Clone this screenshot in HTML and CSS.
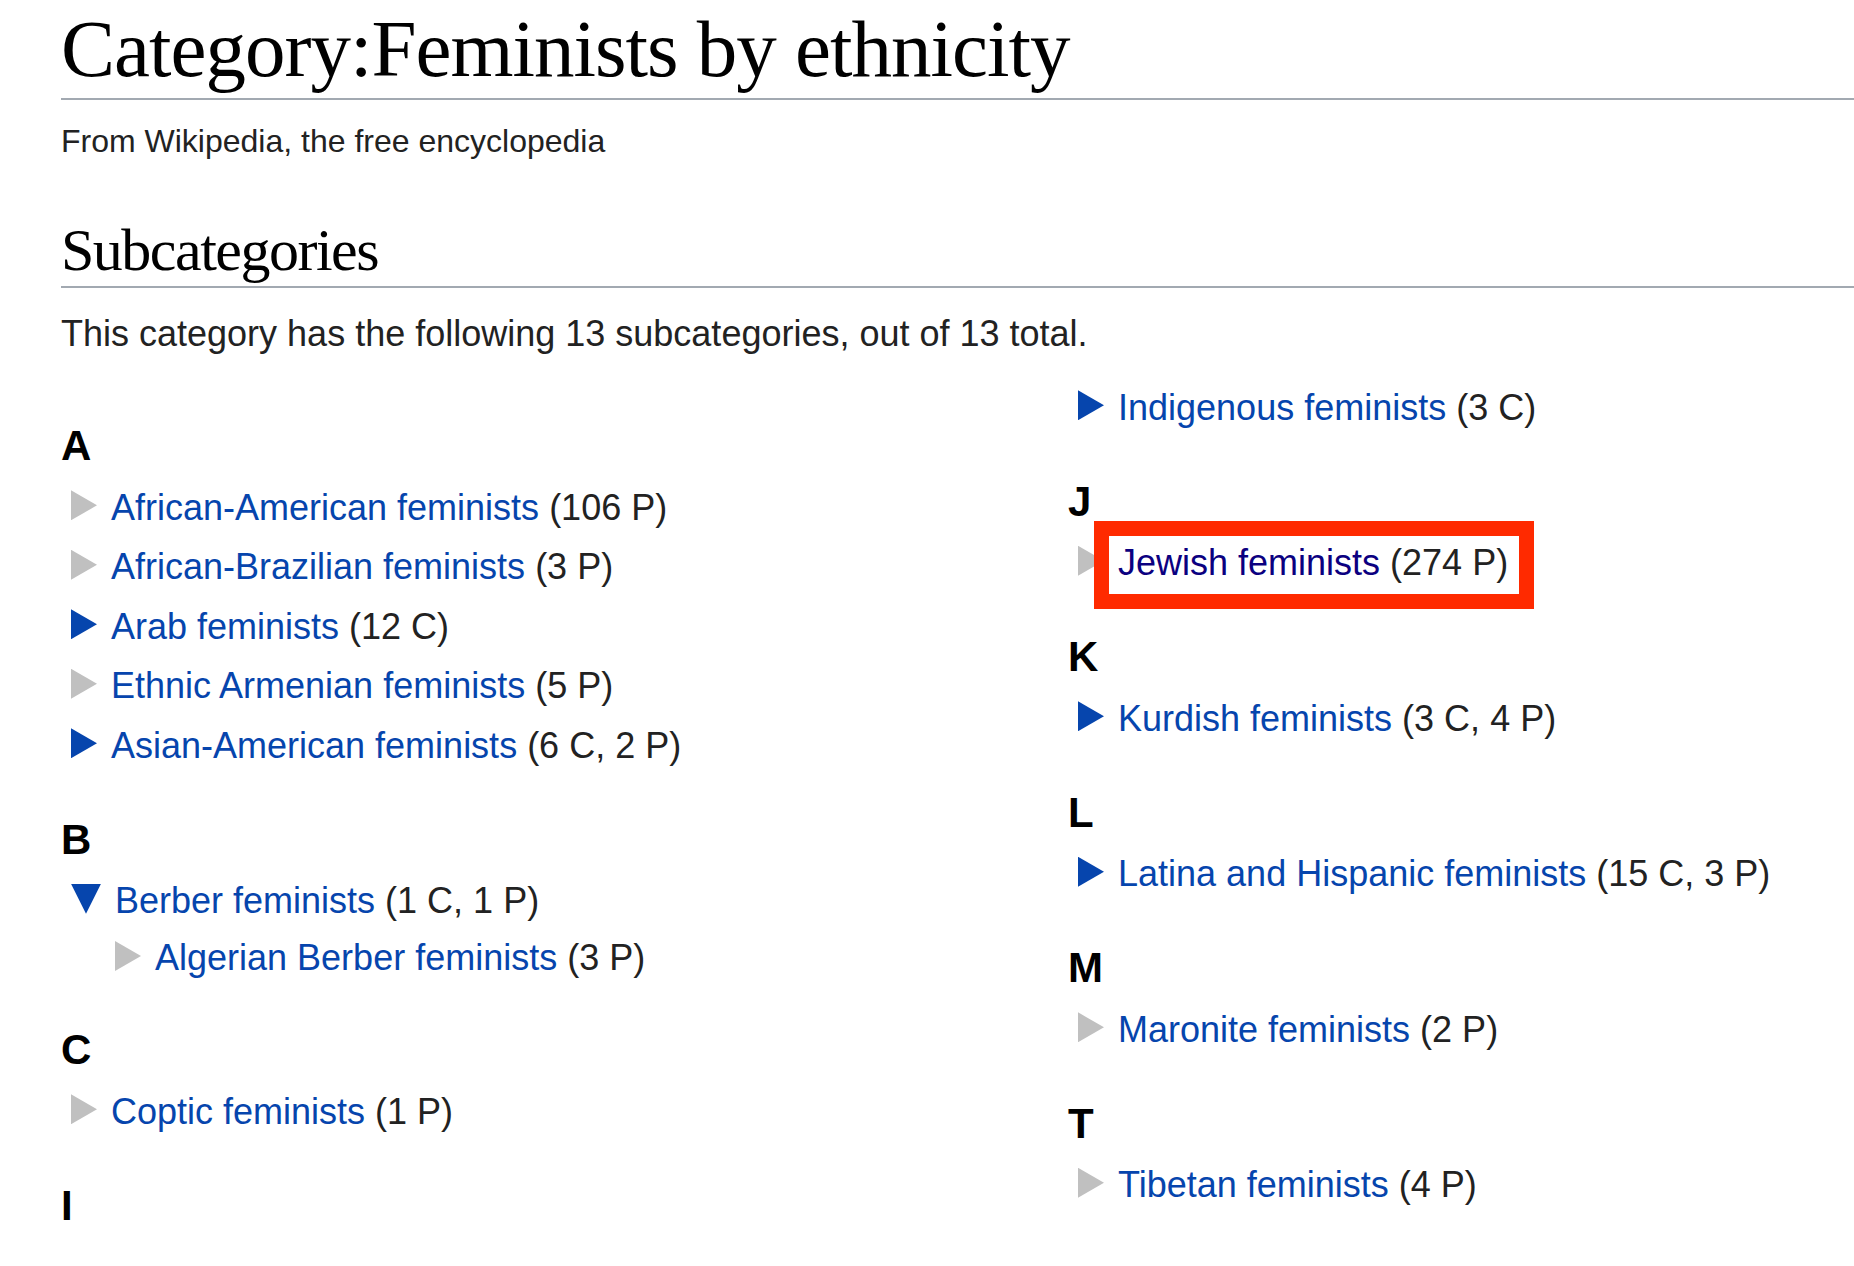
FILE: index.html
```html
<!DOCTYPE html>
<html lang="en">
<head>
  <meta charset="UTF-8" />
  <meta name="viewport" content="width=device-width, initial-scale=1.0" />
  <title>Category:Feminists by ethnicity - Wikipedia</title>
  <link rel="stylesheet" href="styles.css">
</head>
<body>
  <div class="content">
    <h1 class="page-title">Category:Feminists by ethnicity</h1>
    <div class="site-sub">From Wikipedia, the free encyclopedia</div>

    <h2 class="section-title">Subcategories</h2>
    <p class="intro">This category has the following 13 subcategories, out of 13 total.</p>

    <div class="category-columns">
      <div class="category-col first">
        <div class="letter-group">
          <h3>A</h3>
          <ul class="tree">
            <li><div class="row"><span class="bullet"></span><span class="label"><a href="#">African-American feminists</a> (106 P)</span></div></li>
            <li><div class="row"><span class="bullet"></span><span class="label"><a href="#">African-Brazilian feminists</a> (3 P)</span></div></li>
            <li><div class="row"><span class="bullet more"></span><span class="label"><a href="#">Arab feminists</a> (12 C)</span></div></li>
            <li><div class="row"><span class="bullet"></span><span class="label"><a href="#">Ethnic Armenian feminists</a> (5 P)</span></div></li>
            <li><div class="row"><span class="bullet more"></span><span class="label"><a href="#">Asian-American feminists</a> (6 C, 2 P)</span></div></li>
          </ul>
        </div>
        <div class="letter-group">
          <h3>B</h3>
          <ul class="tree">
            <li>
              <div class="row"><span class="bullet open"></span><span class="label"><a href="#">Berber feminists</a> (1 C, 1 P)</span></div>
              <ul class="tree nested">
                <li><div class="row"><span class="bullet"></span><span class="label"><a href="#">Algerian Berber feminists</a> (3 P)</span></div></li>
              </ul>
            </li>
          </ul>
        </div>
        <div class="letter-group">
          <h3>C</h3>
          <ul class="tree">
            <li><div class="row"><span class="bullet"></span><span class="label"><a href="#">Coptic feminists</a> (1 P)</span></div></li>
          </ul>
        </div>
        <div class="letter-group">
          <h3>I</h3>
        </div>
      </div>

      <div class="category-col">
        <div class="letter-group">
          <ul class="tree">
            <li><div class="row"><span class="bullet more"></span><span class="label"><a href="#">Indigenous feminists</a> (3 C)</span></div></li>
          </ul>
        </div>
        <div class="letter-group">
          <h3>J</h3>
          <ul class="tree">
            <li><div class="row"><span class="bullet"></span><span class="label marked"><a href="#" class="visited">Jewish feminists</a> (274 P)</span></div></li>
          </ul>
        </div>
        <div class="letter-group">
          <h3>K</h3>
          <ul class="tree">
            <li><div class="row"><span class="bullet more"></span><span class="label"><a href="#">Kurdish feminists</a> (3 C, 4 P)</span></div></li>
          </ul>
        </div>
        <div class="letter-group">
          <h3>L</h3>
          <ul class="tree">
            <li><div class="row"><span class="bullet more"></span><span class="label"><a href="#">Latina and Hispanic feminists</a> (15 C, 3 P)</span></div></li>
          </ul>
        </div>
        <div class="letter-group">
          <h3>M</h3>
          <ul class="tree">
            <li><div class="row"><span class="bullet"></span><span class="label"><a href="#">Maronite feminists</a> (2 P)</span></div></li>
          </ul>
        </div>
        <div class="letter-group">
          <h3>T</h3>
          <ul class="tree">
            <li><div class="row"><span class="bullet"></span><span class="label"><a href="#">Tibetan feminists</a> (4 P)</span></div></li>
          </ul>
        </div>
      </div>
    </div>
  </div>
</body>
</html>
```

FILE: styles.css
```css
body {
  margin: 0;
  background: #fff;
  color: #222;
  font-family: "Liberation Sans", Arial, sans-serif;
}
.content {
  padding-left: 61px;
}
.page-title {
  margin: 1px 0 0;
  font-family: "Liberation Serif", "Times New Roman", serif;
  font-size: 81px;
  font-weight: normal;
  letter-spacing: -1px;
  line-height: 97px;
  color: #000;
  border-bottom: 2px solid #a2a9b1;
}
.site-sub {
  margin-top: 15.5px;
  font-size: 32px;
  line-height: 51px;
  color: #222;
}
.section-title {
  margin: 48.5px 0 0;
  font-family: "Liberation Serif", "Times New Roman", serif;
  font-size: 60px;
  font-weight: normal;
  letter-spacing: -1.5px;
  line-height: 71px;
  color: #000;
  border-bottom: 2px solid #a2a9b1;
}
.intro {
  margin: 17px 0 0;
  font-size: 36px;
  line-height: 57.6px;
}
.category-columns {
  display: grid;
  grid-template-columns: 1007px 1fr;
  margin-top: 15px;
}
.category-col.first {
  padding-top: 36.5px;
}
.letter-group h3 {
  margin: 0;
  font-size: 42px;
  font-weight: bold;
  line-height: 63.5px;
  color: #000;
}
.tree {
  list-style: none;
  margin: 0 0 32.5px;
  padding: 0;
  font-size: 36px;
}
.tree .row {
  display: flex;
  align-items: center;
  height: 59.5px;
}
.tree.nested {
  margin: 0;
  padding-left: 44px;
}
.tree.nested .row {
  height: 55px;
}
.bullet {
  flex: none;
  width: 26px;
  height: 30px;
  margin: 0 14px 4px 10px;
  background: #c0c0c0;
  clip-path: polygon(0 0, 100% 50%, 0 100%);
}
.bullet.more {
  background: #0645ad;
}
.bullet.open {
  width: 30px;
  background: #0645ad;
  clip-path: polygon(0 0, 100% 0, 50% 100%);
}
.label {
  white-space: nowrap;
  line-height: 59.5px;
}
.label a {
  color: #0645ad;
  text-decoration: none;
}
.label a.visited {
  color: #0b0080;
}
/* red frame drawn around a marked entry */
.label.marked {
  position: relative;
}
.label.marked::after {
  content: "";
  position: absolute;
  left: -24px;
  right: -26px;
  top: -12px;
  bottom: -16px;
  border: 15px solid #ff2a00;
}
```
